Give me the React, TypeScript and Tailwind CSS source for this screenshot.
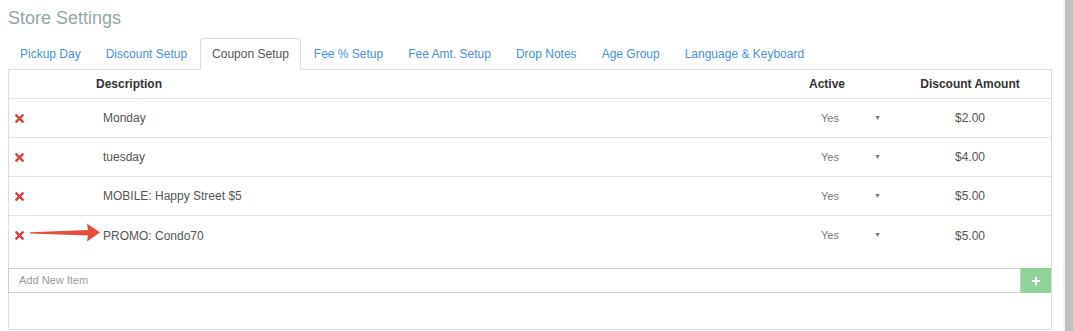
import { FC } from 'react'
import { FaTimes, FaPlus } from 'react-icons/fa'

const tabs = [
  'Pickup Day',
  'Discount Setup',
  'Coupon Setup',
  'Fee % Setup',
  'Fee Amt. Setup',
  'Drop Notes',
  'Age Group',
  'Language & Keyboard',
]

const coupons = [
  { description: 'Monday', active: 'Yes', amount: '$2.00' },
  { description: 'tuesday', active: 'Yes', amount: '$4.00' },
  { description: 'MOBILE: Happy Street $5', active: 'Yes', amount: '$5.00' },
  { description: 'PROMO: Condo70', active: 'Yes', amount: '$5.00' },
]

const Arrow: FC = () => (
  <svg
    className="absolute left-[13px] top-[6px] pointer-events-none"
    width="80"
    height="22"
    viewBox="0 0 80 22"
  >
    <path d="M8,10.2 L66,8 L65,1.5 L78,10.5 L65,19.5 L66,13.5 L8,11.4 Z" fill="#e74c3c" />
  </svg>
)

const App: FC = () => {
  return (
    <div className="flex h-[331px] bg-white font-['Liberation_Sans',Arial,sans-serif]">
      <div className="flex-1 pl-[8px] pr-[11px]">
        <h1 className="pt-[7px] mb-[9px] text-[18px] leading-[22px] text-[#95a5a6]">Store Settings</h1>

        <div className="flex">
          {tabs.map((tab) => (
            <div
              key={tab}
              className={
                tab === 'Coupon Setup'
                  ? 'relative z-10 -mb-px mr-[1px] px-[11px] py-[8px] text-[12px] leading-[14px] text-[#555] bg-white border border-[#ddd] border-b-white rounded-t-[4px]'
                  : 'relative -mb-px mr-[1px] px-[11px] py-[8px] text-[12px] leading-[14px] text-[#4a90d9] border border-transparent'
              }
            >
              {tab}
            </div>
          ))}
        </div>

        <div className="border border-[#ddd] h-[261px]">
          <div className="flex h-[29px] items-center border-b border-[#e3e3e3] text-[12px] font-bold text-[#333]">
            <div className="w-[80px]" />
            <div className="flex-1 pl-[7px]">Description</div>
            <div className="w-[100px] pl-[20px]">Active</div>
            <div className="w-[162px] text-center">Discount Amount</div>
          </div>

          {coupons.map((c, i) => (
            <div
              key={c.description}
              className={`relative flex h-[39px] items-center text-[12px] text-[#555] ${
                i < coupons.length - 1 ? 'border-b border-[#e3e3e3]' : ''
              }`}
            >
              <div className="w-[80px] pl-[4px]">
                <FaTimes className="text-[13px] text-[#d9413b]" />
              </div>
              <div className="flex-1 pl-[14px]">{c.description}</div>
              <div className="flex w-[100px] items-center pl-[32px] text-[11px] text-[#777]">
                <span>{c.active}</span>
                <span className="ml-[35px] text-[7px]">▼</span>
              </div>
              <div className="w-[162px] text-center">{c.amount}</div>
              {i === coupons.length - 1 && <Arrow />}
            </div>
          ))}

          <div className="flex mt-[13px] -ml-px h-[25px]">
            <div className="flex-1 flex items-center border border-[#ccc] pl-[10px] text-[11px] text-[#999]">
              Add New Item
            </div>
            <div className="flex w-[30px] items-center justify-center bg-[#90d39a] text-white">
              <FaPlus className="text-[10px]" />
            </div>
          </div>
        </div>
      </div>
      <div className="w-[10px] border-l-2 border-[#f1f1f1] bg-[#c1c1c1]" />
    </div>
  )
}

export default App
